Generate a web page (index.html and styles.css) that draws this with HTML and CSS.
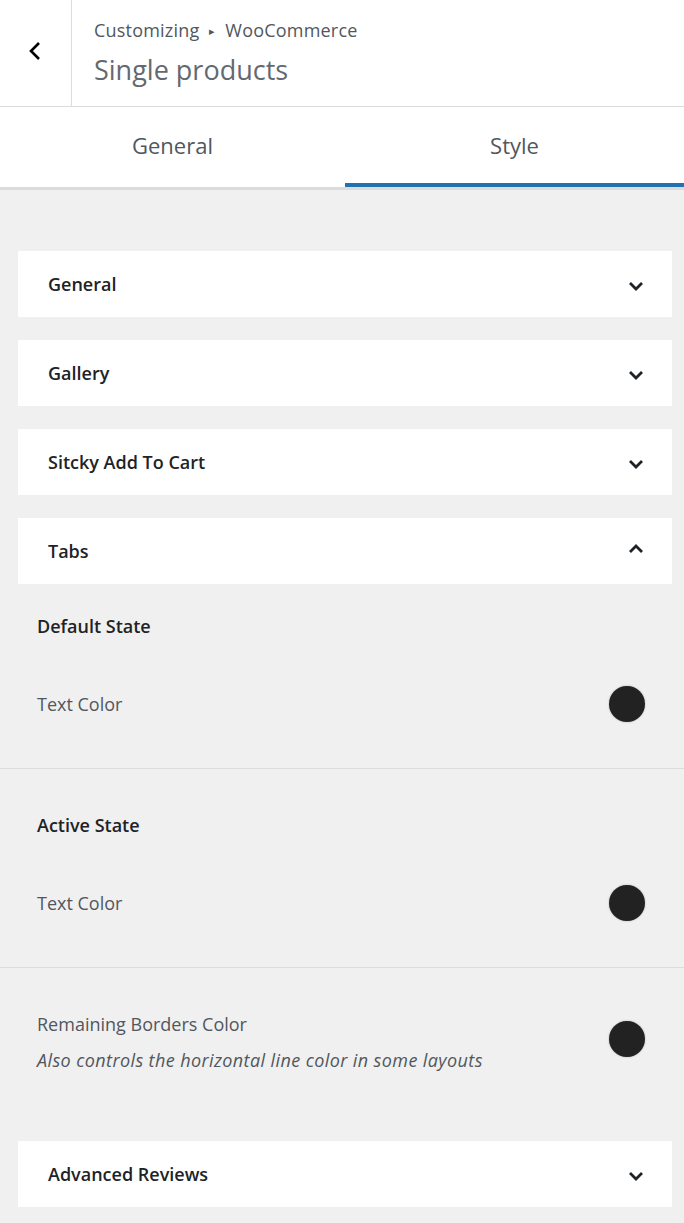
FILE: index.html
```html
<!DOCTYPE html>
<html lang="en">
<head>
  <meta charset="UTF-8" />
  <meta name="viewport" content="width=device-width, initial-scale=1.0" />
  <title>Single products</title>
  <link rel="stylesheet" href="styles.css">
</head>
<body>
  <div class="header">
    <button class="back" aria-label="Back">
      <svg width="14" height="22" viewBox="0 0 14 22"><path d="M11 3 L3 11 L11 19" fill="none" stroke="#000" stroke-width="2.6"/></svg>
    </button>
    <div class="title-wrap">
      <div class="crumbs">Customizing <span class="sep">&#9656;</span> WooCommerce</div>
      <div class="title">Single products</div>
    </div>
  </div>

  <div class="tabs">
    <div class="tab first">General</div>
    <div class="tab active">Style</div>
  </div>

  <div class="content">
    <div class="card">
      <span>General</span>
      <svg class="chev" width="16" height="12" viewBox="0 0 16 12"><path d="M2 3 L8 9 L14 3" fill="none" stroke="#1d2327" stroke-width="2.8"/></svg>
    </div>
    <div class="card">
      <span>Gallery</span>
      <svg class="chev" width="16" height="12" viewBox="0 0 16 12"><path d="M2 3 L8 9 L14 3" fill="none" stroke="#1d2327" stroke-width="2.8"/></svg>
    </div>
    <div class="card">
      <span>Sitcky Add To Cart</span>
      <svg class="chev" width="16" height="12" viewBox="0 0 16 12"><path d="M2 3 L8 9 L14 3" fill="none" stroke="#1d2327" stroke-width="2.8"/></svg>
    </div>
    <div class="card open">
      <span>Tabs</span>
      <svg class="chev up" width="16" height="12" viewBox="0 0 16 12"><path d="M2 9 L8 3 L14 9" fill="none" stroke="#1d2327" stroke-width="2.8"/></svg>
    </div>

    <div class="group first">
      <div class="group-title">Default State</div>
      <div class="row">
        <span class="label">Text Color</span>
        <span class="swatch"></span>
      </div>
    </div>

    <div class="group">
      <div class="group-title">Active State</div>
      <div class="row">
        <span class="label">Text Color</span>
        <span class="swatch"></span>
      </div>
    </div>

    <div class="group last">
      <div class="row top">
        <div>
          <div class="label">Remaining Borders Color</div>
          <div class="desc">Also controls the horizontal line color in some layouts</div>
        </div>
        <span class="swatch"></span>
      </div>
    </div>

    <div class="card">
      <span>Advanced Reviews</span>
      <svg class="chev" width="16" height="12" viewBox="0 0 16 12"><path d="M2 3 L8 9 L14 3" fill="none" stroke="#1d2327" stroke-width="2.8"/></svg>
    </div>
  </div>
</body>
</html>
```

FILE: styles.css
```css
body {
  font-family: "Open Sans", "Noto Sans", sans-serif;
  background: #f0f0f0;
  color: #1d2327;
  margin: 0;
}

.header {
  display: flex;
  height: 106px;
  background: #fff;
  border-bottom: 1px solid #dcdcde;
}

.back {
  width: 72px;
  border: none;
  border-right: 1px solid #dcdcde;
  background: #fff;
  display: flex;
  align-items: center;
  justify-content: center;
  padding: 0 2px 4px 0;
}

.title-wrap {
  padding: 17px 0 0 22px;
}

.crumbs {
  font-size: 18px;
  line-height: 26px;
  color: #50575e;
  letter-spacing: 0.2px;
}

.crumbs .sep {
  font-size: 11px;
  margin: 0 5px;
  vertical-align: 2px;
}

.title {
  font-size: 27px;
  line-height: 36px;
  color: #646970;
  margin-top: 8px;
}

.tabs {
  display: flex;
  background: #fff;
  border-bottom: 3px solid #dcdcde;
}

.tab {
  flex: 1;
  height: 80px;
  box-sizing: border-box;
  padding-top: 23px;
  text-align: center;
  font-size: 22px;
  color: #50575e;
}

.tab.first {
  flex: 0 0 345px;
}

.tab.active {
  border-bottom: 4px solid #2271b1;
}

.content {
  padding: 61px 0 40px;
}

.card {
  display: flex;
  align-items: center;
  justify-content: space-between;
  height: 66px;
  margin: 0 12px 23px 18px;
  padding: 0 28px 0 30px;
  background: #fff;
  font-size: 18px;
  font-weight: 600;
}

.chev {
  margin-top: 4px;
}

.chev.up {
  margin-top: -4px;
}

.card.open {
  margin-bottom: 0;
}

.group {
  padding: 43px 39px 46px 37px;
  border-bottom: 1px solid #dcdcde;
}

.group.first {
  padding-top: 29px;
}

.group.last {
  border-bottom: none;
  padding-bottom: 68px;
}

.group-title {
  font-size: 18px;
  line-height: 26px;
  font-weight: 600;
  margin-bottom: 47px;
}

.row {
  display: flex;
  align-items: center;
  justify-content: space-between;
}

.row.top {
  align-items: flex-start;
}

.row.top .swatch {
  margin-top: 10px;
}

.label {
  font-size: 18px;
  line-height: 26px;
  color: #50575e;
}

.desc {
  font-size: 18px;
  line-height: 26px;
  font-style: italic;
  color: #50575e;
  margin-top: 10px;
  letter-spacing: 0.4px;
}

.swatch {
  width: 36px;
  height: 36px;
  border-radius: 50%;
  background: #222;
  box-shadow: 0 0 2px rgba(0, 0, 0, 0.3);
}
```
